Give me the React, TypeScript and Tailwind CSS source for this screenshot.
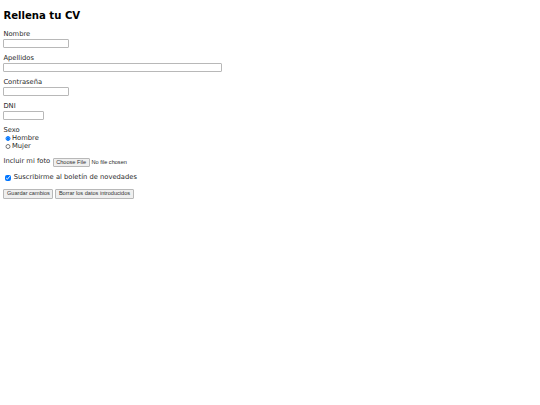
export default function App() {
  const inputClass =
    "block h-[9.3px] border border-[#b8b8b8] rounded-[1px] bg-white px-[1px] text-[5.6px]";
  const buttonClass =
    "h-[9.4px] px-[2.6px] border border-[#b8b8b8] rounded-[1px] bg-[#efefef] text-[5.6px] leading-none text-[#333]";

  return (
    <div className="min-h-[405px] bg-white px-[3.4px] pt-[10.4px] pb-[8.4px] text-[6.75px] leading-[1.164] text-[#2a2a2a] [font-family:'DejaVu_Sans',sans-serif]">
      <h2 className="mb-[8.6px] text-[10.125px] font-bold leading-[1.164] text-black">Rellena tu CV</h2>

      <form className="flex flex-col">
        <div className="mb-[6.9px]">
          <label className="block">Nombre</label>
          <input type="text" className={`${inputClass} w-[66px]`} />
        </div>

        <div className="mb-[6.9px]">
          <label className="block">Apellidos</label>
          <input type="text" className={`${inputClass} w-[218.5px]`} />
        </div>

        <div className="mb-[6.9px]">
          <label className="block">Contraseña</label>
          <input type="password" className={`${inputClass} w-[66px]`} />
        </div>

        <div className="mb-[6.9px]">
          <label className="block">DNI</label>
          <input type="text" className={`${inputClass} w-[41px]`} />
        </div>

        <div className="mb-[7.2px]">
          <div>Sexo</div>
          <label className="flex items-center gap-[1.4px] pl-[1.8px]">
            <input type="radio" name="sexo" defaultChecked className="h-[5.4px] w-[5.4px] accent-[#0075ff]" />
            Hombre
          </label>
          <label className="flex items-center gap-[1.4px] pl-[1.8px]">
            <input type="radio" name="sexo" className="h-[5.4px] w-[5.4px] accent-[#0075ff]" />
            Mujer
          </label>
        </div>

        <div className="mb-[7.2px] flex items-center gap-[2.4px]">
          <span>Incluir mi foto</span>
          <input
            type="file"
            className="text-[5.6px] [font-family:'Liberation_Sans',Arial,sans-serif] file:mr-[1.8px] file:h-[9.4px] file:rounded-[1px] file:border file:border-[#b8b8b8] file:bg-[#efefef] file:px-[2.6px] file:text-[#333]"
          />
        </div>

        <label className="mb-[7.2px] flex items-center gap-[3.2px] pl-[1.8px]">
          <input type="checkbox" defaultChecked className="h-[5.4px] w-[5.4px] accent-[#0075ff]" />
          Suscribirme al boletín de novedades
        </label>

        <div className="flex items-center gap-[1.8px] [font-family:'Liberation_Sans',Arial,sans-serif]">
          <button type="button" className={buttonClass}>Guardar cambios</button>
          <button type="reset" className={buttonClass}>Borrar los datos introducidos</button>
        </div>
      </form>
    </div>
  );
}
